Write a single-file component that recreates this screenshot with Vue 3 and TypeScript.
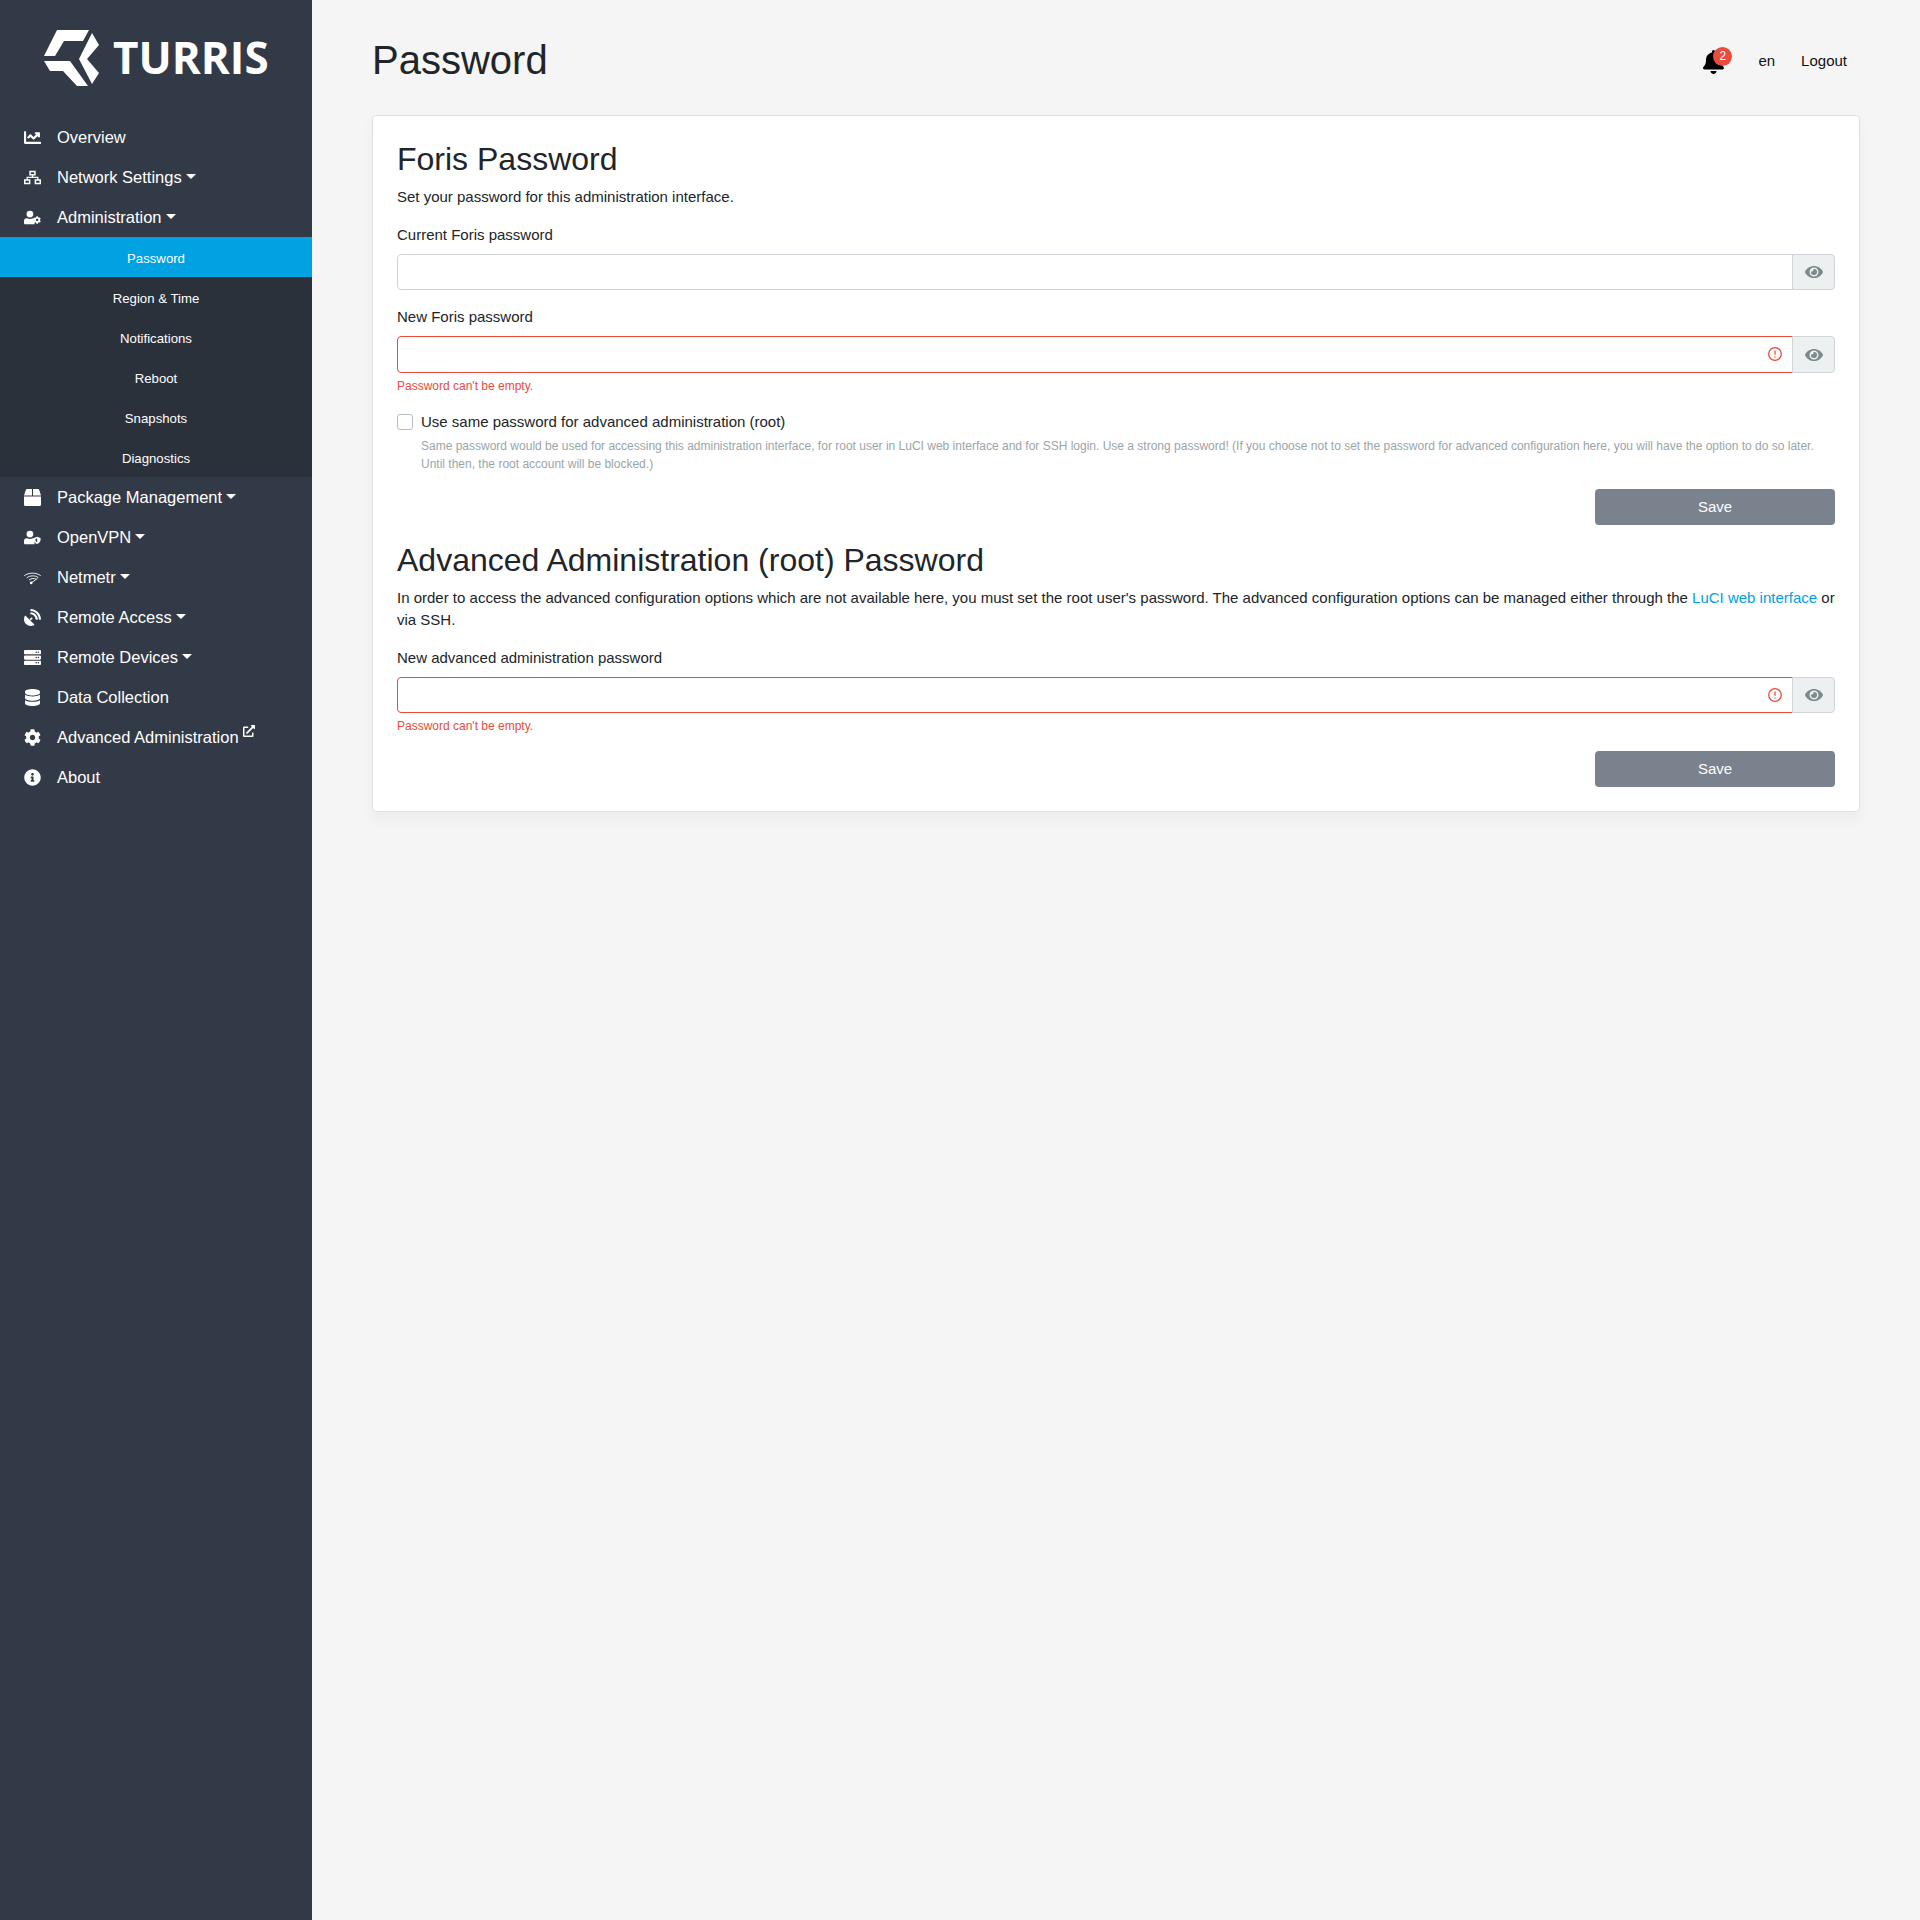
<script setup lang="ts">
interface NavIcon {
  vb: string
  d?: string
  line?: string
}
interface NavItem {
  label: string
  icon: NavIcon
  caret?: boolean
  external?: boolean
  children?: string[]
}

const cog =
  'M487.4 315.7l-42.6-24.6c4.3-23.2 4.3-47 0-70.2l42.6-24.6c4.9-2.8 7.1-8.6 5.5-14-11.1-35.6-30-67.8-54.7-94.6-3.8-4.1-10-5.1-14.8-2.3L380.8 110c-17.9-15.4-38.5-27.3-60.8-35.1V25.8c0-5.6-3.9-10.5-9.4-11.7-36.7-8.2-74.3-7.8-109.2 0-5.5 1.2-9.4 6.1-9.4 11.7V75c-22.2 7.9-42.8 19.8-60.8 35.1L88.7 85.5c-4.9-2.8-11-1.9-14.8 2.3-24.7 26.7-43.6 58.9-54.7 94.6-1.7 5.4.6 11.2 5.5 14L67.3 221c-4.3 23.2-4.3 47 0 70.2l-42.6 24.6c-4.9 2.8-7.1 8.6-5.5 14 11.1 35.6 30 67.8 54.7 94.6 3.8 4.1 10 5.1 14.8 2.3l42.6-24.6c17.9 15.4 38.5 27.3 60.8 35.1v49.2c0 5.6 3.9 10.5 9.4 11.7 36.7 8.2 74.3 7.8 109.2 0 5.5-1.2 9.4-6.1 9.4-11.7v-49.2c22.2-7.9 42.8-19.8 60.8-35.1l42.6 24.6c4.9 2.8 11 1.9 14.8-2.3 24.7-26.7 43.6-58.9 54.7-94.6 1.5-5.5-.7-11.3-5.6-14.1zM256 336c-44.1 0-80-35.9-80-80s35.9-80 80-80 80 35.9 80 80-35.9 80-80 80z'

const person =
  'M224 256a128 128 0 1 0 0-256 128 128 0 0 0 0 256zM350 288h-16c-34 16-70 24-110 24s-76-8-110-24H96C43 288 0 331 0 384v80c0 26 22 48 48 48h352V288z'

const nav: NavItem[] = [
  {
    label: 'Overview',
    icon: {
      vb: '0 0 512 512',
      d: 'M496 384H64V80c0-8.84-7.16-16-16-16H16C7.16 64 0 71.16 0 80v336c0 17.67 14.33 32 32 32h464c8.84 0 16-7.16 16-16v-32c0-8.84-7.16-16-16-16zM464 96H345.94c-21.38 0-32.09 25.85-16.97 40.97l32.4 32.4L288 242.75l-73.37-73.37c-12.5-12.5-32.76-12.5-45.25 0l-68.69 68.69c-6.25 6.25-6.25 16.38 0 22.63l22.62 22.62c6.25 6.25 16.38 6.25 22.63 0L192 237.25l73.37 73.37c12.5 12.5 32.76 12.5 45.25 0l96-96 32.4 32.4c15.12 15.12 40.97 4.41 40.97-16.97V112c.01-8.84-7.15-16-15.99-16z'
    }
  },
  {
    label: 'Network Settings',
    caret: true,
    icon: {
      vb: '0 0 640 512',
      d: 'M200 0H440V176H200ZM256 56H384V120H256ZM296 176H344V224H296ZM96 224H544V272H96ZM96 272H144V320H96ZM496 272H544V320H496ZM0 320H240V512H0ZM56 376H184V456H56ZM400 320H640V512H400ZM456 376H584V456H456Z'
    }
  },
  {
    label: 'Administration',
    caret: true,
    icon: { vb: '0 0 640 512', d: person, line: 'cog' },
    children: ['Password', 'Region & Time', 'Notifications', 'Reboot', 'Snapshots', 'Diagnostics']
  },
  {
    label: 'Package Management',
    caret: true,
    icon: {
      vb: '0 0 512 512',
      d: 'M509.5 184.6L458.9 32.8C452.4 13.2 434.1 0 413.4 0H272v192h238.7c-.4-2.5-.4-5-1.2-7.4zM240 0H98.6c-20.7 0-39 13.2-45.5 32.8L2.5 184.6c-.8 2.4-.8 4.9-1.2 7.4H240V0zM0 224v240c0 26.5 21.5 48 48 48h416c26.5 0 48-21.5 48-48V224H0z'
    }
  },
  {
    label: 'OpenVPN',
    caret: true,
    icon: { vb: '0 0 640 512', d: person, line: 'shield' }
  },
  {
    label: 'Netmetr',
    caret: true,
    icon: { vb: '0 0 640 512', line: 'wifi' }
  },
  {
    label: 'Remote Access',
    caret: true,
    icon: {
      vb: '0 0 512 512',
      d: 'M305.44954,462.59c7.39157,7.29792,6.18829,20.09661-3.00038,25.00356-77.713,41.80281-176.72559,29.9105-242.34331-35.7082C-5.49624,386.28227-17.404,287.362,24.41381,209.554c4.89125-9.095,17.68975-10.29834,25.00318-3.00043L166.22872,323.36708l27.39411-27.39452c-.68759-2.60974-1.594-5.00071-1.594-7.81361a32.00407,32.00407,0,1,1,32.00407,32.00455c-2.79723,0-5.20378-.89075-7.79786-1.594l-27.40974,27.41015ZM511.9758,303.06732a16.10336,16.10336,0,0,1-16.002,17.00242H463.86031a15.96956,15.96956,0,0,1-15.89265-15.00213C440.46671,175.5492,336.45348,70.53427,207.03078,63.53328a15.84486,15.84486,0,0,1-15.00191-15.90852V16.02652A16.09389,16.09389,0,0,1,209.031.02425C372.25491,8.61922,503.47472,139.841,511.9758,303.06732Zm-96.01221-.29692a16.21093,16.21093,0,0,1-16.11142,17.29934H367.645a16.06862,16.06862,0,0,1-15.89265-14.70522c-6.90712-77.01094-68.118-138.91037-144.92467-145.22376a15.94,15.94,0,0,1-14.79876-15.89289V112.13393a16.134,16.134,0,0,1,17.29908-16.096C319.45132,104.5391,407.55627,192.64538,415.96359,302.7704Z'
    }
  },
  {
    label: 'Remote Devices',
    caret: true,
    icon: {
      vb: '0 0 512 512',
      d: 'M480 160H32c-17.673 0-32-14.327-32-32V64c0-17.673 14.327-32 32-32h448c17.673 0 32 14.327 32 32v64c0 17.673-14.327 32-32 32zm-48-88c-13.255 0-24 10.745-24 24s10.745 24 24 24 24-10.745 24-24-10.745-24-24-24zm-64 0c-13.255 0-24 10.745-24 24s10.745 24 24 24 24-10.745 24-24-10.745-24-24-24zm112 248H32c-17.673 0-32-14.327-32-32v-64c0-17.673 14.327-32 32-32h448c17.673 0 32 14.327 32 32v64c0 17.673-14.327 32-32 32zm-48-88c-13.255 0-24 10.745-24 24s10.745 24 24 24 24-10.745 24-24-10.745-24-24-24zm-64 0c-13.255 0-24 10.745-24 24s10.745 24 24 24 24-10.745 24-24-10.745-24-24-24zm112 248H32c-17.673 0-32-14.327-32-32v-64c0-17.673 14.327-32 32-32h448c17.673 0 32 14.327 32 32v64c0 17.673-14.327 32-32 32zm-48-88c-13.255 0-24 10.745-24 24s10.745 24 24 24 24-10.745 24-24-10.745-24-24-24zm-64 0c-13.255 0-24 10.745-24 24s10.745 24 24 24 24-10.745 24-24-10.745-24-24-24z'
    }
  },
  {
    label: 'Data Collection',
    icon: {
      vb: '0 0 448 512',
      d: 'M448 73.143v45.714C448 159.143 347.667 192 224 192S0 159.143 0 118.857V73.143C0 32.857 100.333 0 224 0s224 32.857 224 73.143zM448 176v102.857C448 319.143 347.667 352 224 352S0 319.143 0 278.857V176c48.125 33.143 136.208 48.572 224 48.572S399.874 209.143 448 176zm0 160v102.857C448 479.143 347.667 512 224 512S0 479.143 0 438.857V336c48.125 33.143 136.208 48.572 224 48.572S399.874 369.143 448 336z'
    }
  },
  {
    label: 'Advanced Administration',
    external: true,
    icon: { vb: '0 0 512 512', d: cog }
  },
  {
    label: 'About',
    icon: {
      vb: '0 0 512 512',
      d: 'M256 8C119.043 8 8 119.083 8 256c0 136.997 111.043 248 248 248s248-111.003 248-248C504 119.083 392.957 8 256 8zm0 110c23.196 0 42 18.804 42 42s-18.804 42-42 42-42-18.804-42-42 18.804-42 42-42zm56 254c0 6.627-5.373 12-12 12h-88c-6.627 0-12-5.373-12-12v-24c0-6.627 5.373-12 12-12h12v-64h-12c-6.627 0-12-5.373-12-12v-24c0-6.627 5.373-12 12-12h64c6.627 0 12 5.373 12 12v100h12c6.627 0 12 5.373 12 12v24z'
    }
  }
]

const eye =
  'M572.52 241.4C518.29 135.59 410.93 64 288 64S57.68 135.64 3.48 241.41a32.35 32.35 0 0 0 0 29.19C57.71 376.41 165.07 448 288 448s230.32-71.64 284.52-177.41a32.35 32.35 0 0 0 0-29.19zM288 400a144 144 0 1 1 144-144 143.93 143.93 0 0 1-144 144zm0-240a95.31 95.31 0 0 0-25.31 3.79 47.85 47.85 0 0 1-66.9 66.9A95.78 95.78 0 1 0 288 160z'
const externalLink =
  'M432,320H400a16,16,0,0,0-16,16V448H64V128H208a16,16,0,0,0,16-16V80a16,16,0,0,0-16-16H48A48,48,0,0,0,0,112V464a48,48,0,0,0,48,48H400a48,48,0,0,0,48-48V336A16,16,0,0,0,432,320ZM488,0h-128c-21.37,0-32.05,25.91-16.96,41l35.73,35.73L135,320.37a24,24,0,0,0,0,34L157.67,377a24,24,0,0,0,34,0L435.28,133.32,471,169c15,15,41,4.5,41-17V24A24,24,0,0,0,488,0Z'
const bell =
  'M224 512c35.32 0 63.97-28.65 63.97-64H160.03c0 35.35 28.65 64 63.97 64zm215.39-149.71c-19.32-20.76-55.47-51.99-55.47-154.29 0-77.7-54.48-139.9-127.94-155.16V32c0-17.67-14.32-32-31.98-32s-31.98 14.33-31.98 32v20.84C118.56 68.1 64.08 130.3 64.08 208c0 102.3-36.15 133.53-55.47 154.29-6 6.45-8.66 14.16-8.61 21.71.11 16.4 12.98 32 32.1 32h383.8c19.12 0 32-15.6 32.1-32 .05-7.55-2.61-15.27-8.61-21.71z'
</script>

<template>
  <div class="layout">
    <aside class="sidebar">
      <div class="brand">
        <svg class="brand-mark" viewBox="44 30 55 56" width="55" height="56">
          <path d="M57 30H89L83 41H64L55 56H44Z" />
          <path d="M92 33 99 45 87 59 99 73 92 84 79 59Z" />
          <path d="M44 61H70L88 86H77L63 71H50Z" />
        </svg>
        <span class="brand-name">TURRIS</span>
      </div>

      <nav class="menu">
        <template v-for="item in nav" :key="item.label">
          <a class="menu-item">
            <span class="menu-icon">
              <svg :viewBox="item.icon.vb" width="17" height="17">
                <path v-if="item.icon.d" :d="item.icon.d" fill-rule="evenodd" />
                <path v-if="item.icon.line === 'cog'" transform="translate(352 208) scale(.56)" :d="cog" />
                <path
                  v-if="item.icon.line === 'shield'"
                  d="M496 224l128 52v68c0 72-56 128-128 168-72-40-128-96-128-168v-68zm0 64l-64 26v30c0 40 26 72 64 96z"
                  fill-rule="evenodd"
                />
                <g v-if="item.icon.line === 'wifi'" class="wifi">
                  <path d="M10 190C180 60 460 60 630 190" />
                  <path d="M100 270C240 170 400 170 540 260" />
                  <path d="M190 345C290 280 380 280 450 320" />
                  <path d="M270 460 510 290" />
                  <circle class="wifi-dot" cx="270" cy="460" r="50" />
                </g>
              </svg>
            </span>
            <span>{{ item.label }}</span>
            <span v-if="item.caret" class="caret"></span>
            <svg v-if="item.external" class="external" viewBox="0 0 512 512" width="12" height="12">
              <path :d="externalLink" />
            </svg>
          </a>
          <div v-if="item.children" class="submenu">
            <a
              v-for="(child, i) in item.children"
              :key="child"
              class="submenu-item"
              :class="{ active: i === 0 }"
            >{{ child }}</a>
          </div>
        </template>
      </nav>
    </aside>

    <main class="content">
      <header class="topbar">
        <h1>Password</h1>
        <div class="topbar-links">
          <span class="bell">
            <svg viewBox="0 0 448 512" width="21" height="24"><path :d="bell" /></svg>
            <span class="badge">2</span>
          </span>
          <a class="lang">en</a>
          <a class="logout">Logout</a>
        </div>
      </header>

      <section class="card">
        <h2>Foris Password</h2>
        <p class="lead">Set your password for this administration interface.</p>

        <label class="field-label">Current Foris password</label>
        <div class="input-group">
          <input class="input" type="password" />
          <span class="addon"><svg viewBox="0 0 576 512" width="18" height="16"><path :d="eye" /></svg></span>
        </div>

        <label class="field-label">New Foris password</label>
        <div class="input-group tall">
          <input class="input invalid" type="password" />
          <svg class="alert-icon" viewBox="0 0 14 14" width="14" height="14">
            <circle cx="7" cy="7" r="6.3" />
            <path d="M7 3.4v4.4M7 9.4v1.2" />
          </svg>
          <span class="addon"><svg viewBox="0 0 576 512" width="18" height="16"><path :d="eye" /></svg></span>
        </div>
        <div class="error">Password can't be empty.</div>

        <div class="check">
          <input class="check-box" type="checkbox" />
          <div>
            <div class="check-label">Use same password for advanced administration (root)</div>
            <small class="check-help">Same password would be used for accessing this administration interface, for root user in LuCI web interface and for SSH login. Use a strong password! (If you choose not to set the password for advanced configuration here, you will have the option to do so later. Until then, the root account will be blocked.)</small>
          </div>
        </div>

        <div class="actions"><button class="save" type="button">Save</button></div>

        <h2 class="root-title">Advanced Administration (root) Password</h2>
        <p class="root-text">In order to access the advanced configuration options which are not available here, you must set the root user's password. The advanced configuration options can be managed either through the <a class="link">LuCI web interface</a> or via SSH.</p>

        <label class="field-label">New advanced administration password</label>
        <div class="input-group">
          <input class="input invalid" type="password" />
          <svg class="alert-icon" viewBox="0 0 14 14" width="14" height="14">
            <circle cx="7" cy="7" r="6.3" />
            <path d="M7 3.4v4.4M7 9.4v1.2" />
          </svg>
          <span class="addon"><svg viewBox="0 0 576 512" width="18" height="16"><path :d="eye" /></svg></span>
        </div>
        <div class="error">Password can't be empty.</div>

        <div class="actions"><button class="save" type="button">Save</button></div>
      </section>
    </main>
  </div>
</template>

<style>
html,
body {
  margin: 0;
  background: #f5f5f5;
}
</style>

<style scoped>
.layout {
  display: flex;
  min-height: 1920px;
  font-family: "Liberation Sans", Arial, sans-serif;
  font-size: 15px;
  line-height: 22px;
  color: #212529;
}

.sidebar {
  width: 312px;
  flex-shrink: 0;
  background: #333a47;
  color: #fff;
}

.brand {
  height: 117px;
  box-sizing: border-box;
  padding: 30px 0 0 44px;
  display: flex;
  align-items: flex-start;
  gap: 14px;
}

.brand-mark {
  fill: #fff;
  flex-shrink: 0;
}

.brand-name {
  margin-top: -1px;
  font-family: "Open Sans", sans-serif;
  font-weight: 700;
  font-size: 44px;
  line-height: 56px;
}

.menu-item {
  display: flex;
  align-items: center;
  box-sizing: border-box;
  height: 40px;
  padding-left: 24px;
  font-size: 16.5px;
}

.menu-icon {
  width: 33px;
  flex-shrink: 0;
  display: flex;
}

.menu-icon svg {
  fill: #fff;
}

.wifi path {
  fill: none;
  stroke: #fff;
  stroke-width: 34;
}

.wifi-dot {
  fill: #fff;
}

.caret {
  margin-left: 4px;
  margin-top: -2px;
  border-top: 5px solid #fff;
  border-left: 5px solid transparent;
  border-right: 5px solid transparent;
}

.external {
  fill: #fff;
  margin: -12px 0 0 4px;
}

.submenu {
  background: #2b313b;
}

.submenu-item {
  display: block;
  height: 40px;
  line-height: 43px;
  text-align: center;
  font-size: 13.2px;
}

.submenu-item.active {
  background: #00a2e2;
}

.content {
  flex: 1;
  padding: 0 60px;
  min-width: 0;
}

.topbar {
  height: 115px;
  display: flex;
  align-items: flex-start;
  justify-content: space-between;
}

h1 {
  margin: 36px 0 0;
  font-size: 40px;
  line-height: 48px;
  font-weight: 400;
}

.topbar-links {
  display: flex;
  align-items: center;
  margin-top: 47px;
  padding-right: 13px;
  color: #111;
}

.bell {
  position: relative;
  display: flex;
  margin: 3px 34px 0 0;
}

.badge {
  position: absolute;
  top: -3px;
  left: 10px;
  width: 19px;
  height: 19px;
  border-radius: 50%;
  background: #e74c3c;
  color: #fff;
  font-size: 12px;
  line-height: 19px;
  text-align: center;
}

.lang {
  margin-right: 26px;
}

.card {
  background: #fff;
  border: 1px solid #dee2e6;
  border-radius: 4px;
  box-shadow: 0 8px 16px rgba(0, 0, 0, 0.04);
  padding: 24px;
}

h2 {
  margin: 0;
  font-size: 32px;
  line-height: 38px;
  font-weight: 400;
}

.lead {
  margin: 8px 0 0;
}

.field-label {
  display: block;
  margin: 16px 0 8px;
}

.input-group {
  position: relative;
  display: flex;
  height: 36px;
}

.input-group.tall {
  height: 37px;
}

.input {
  flex: 1;
  min-width: 0;
  box-sizing: border-box;
  height: 100%;
  border: 1px solid #ced4da;
  border-radius: 4px 0 0 4px;
  background: #fff;
  outline: none;
}

.input.invalid {
  border-color: #e74c3c;
}

.alert-icon {
  position: absolute;
  right: 53px;
  top: 11px;
  fill: none;
  stroke: #e74c3c;
  stroke-width: 1.3;
}

.addon {
  width: 43px;
  box-sizing: border-box;
  margin-left: -1px;
  border: 1px solid #ced4da;
  border-radius: 0 4px 4px 0;
  background: #ecf0f1;
  display: flex;
  align-items: center;
  justify-content: center;
}

.addon svg {
  fill: #7b8a8b;
}

.error {
  margin-top: 4px;
  font-size: 12px;
  line-height: 18px;
  color: #e74c3c;
}

.check {
  display: flex;
  margin-top: 16px;
}

.check-box {
  appearance: none;
  width: 16px;
  height: 16px;
  margin: 3px 8px 0 0;
  flex-shrink: 0;
  border: 1px solid #b4bcc4;
  border-radius: 3px;
  background: #fff;
}

.check-label {
  line-height: 22px;
}

.check-help {
  display: block;
  margin-top: 4px;
  font-size: 12px;
  line-height: 18px;
  color: #9aa5a8;
}

.actions {
  display: flex;
  justify-content: flex-end;
  margin-top: 16px;
}

.save {
  width: 240px;
  height: 36px;
  border: 0;
  border-radius: 4px;
  background: #7a828e;
  color: #fff;
  font: inherit;
}

.root-title {
  margin-top: 16px;
}

.root-text {
  margin: 8px 0 0;
}

.link {
  color: #00a2e2;
}
</style>
